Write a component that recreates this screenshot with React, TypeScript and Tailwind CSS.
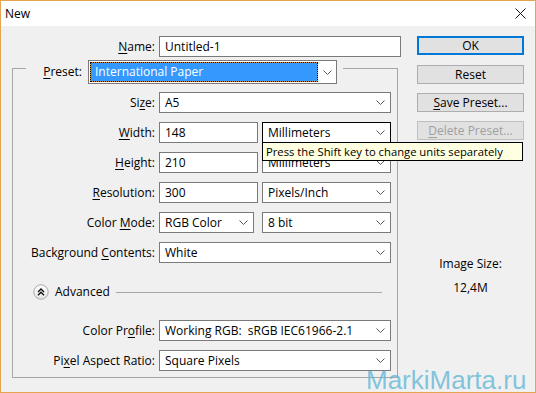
import React from "react";

function Chevron() {
  return (
    <svg width="9" height="5" viewBox="0 0 9 5" className="shrink-0">
      <polyline points="0.5,0.5 4.5,4.5 8.5,0.5" fill="none" stroke="#5a5a5a" strokeWidth="1" />
    </svg>
  );
}

function Select({ w, value, focused }: { w: string; value: string; focused?: boolean }) {
  return (
    <div
      className={`${w} h-[21px] bg-white border ${focused ? "border-black" : "border-[#7a7a7a]"} flex items-center justify-between pl-[5px] pr-[5px]`}
    >
      <span className="whitespace-pre">{value}</span>
      <Chevron />
    </div>
  );
}

function TextBox({ w, value }: { w: string; value: string }) {
  return (
    <div className={`${w} h-[21px] bg-white border border-[#7a7a7a] flex items-center pl-[5px]`}>
      {value}
    </div>
  );
}

function Row({ label, children, className = "" }: { label: React.ReactNode; children: React.ReactNode; className?: string }) {
  return (
    <div className={`flex items-center h-[21px] ${className}`}>
      <div className="w-[142px] text-right whitespace-nowrap">{label}</div>
      <div className="ml-[4px] flex items-center gap-[4px]">{children}</div>
    </div>
  );
}

function U({ children }: { children: React.ReactNode }) {
  return <span className="underline underline-offset-[2px]">{children}</span>;
}

export default function App() {
  return (
    <div className="relative w-[536px] h-[393px] border border-[#e4a450] bg-[#f0f0f0] flex flex-col text-[12px] leading-[16px] text-black font-['Open_Sans',sans-serif] overflow-hidden">
      {/* title bar */}
      <div className="h-[25px] bg-white flex items-center justify-between pl-[4px] pr-[9px]">
        <span>New</span>
        <svg width="11" height="11" viewBox="0 0 11 11">
          <path d="M0.5 0.5 L10.5 10.5 M10.5 0.5 L0.5 10.5" stroke="#111" strokeWidth="1" />
        </svg>
      </div>

      <div className="flex flex-1 pl-[11px]">
        {/* left side */}
        <div className="w-[389px] flex flex-col pt-[10px]">
          <div className="flex items-center h-[21px]">
            <div className="w-[143px] text-right">
              <U>N</U>ame:
            </div>
            <div className="ml-[4px]">
              <TextBox w="w-[242px]" value="Untitled-1" />
            </div>
          </div>

          <div className="mt-[11px] w-[386px] h-[310px] border border-[#a6a6a6] flex flex-col">
            {/* preset legend */}
            <div className="relative mt-[-9px] ml-[13px] w-[317px] h-[24px] bg-[#f0f0f0] flex items-center">
              <div className="w-[56px] text-right">
                <U>P</U>reset:
              </div>
              <div className="ml-[6px] w-[249px] h-[24px] bg-white border border-[#7a7a7a] flex items-center pl-[1px] pr-[4px]">
                <div className="w-[228px] h-[20px] border border-dotted border-black bg-[#d08a30]">
                  <div className="h-full bg-[#3399ff] text-white flex items-center pl-[4px]">International Paper</div>
                </div>
                <div className="flex-1 flex justify-end">
                  <Chevron />
                </div>
              </div>
            </div>

            <Row label={<>Si<U>z</U>e:</>} className="mt-[8px]">
              <Select w="w-[232px]" value="A5" />
            </Row>
            <Row label={<><U>W</U>idth:</>} className="mt-[9px] relative z-20">
              <TextBox w="w-[99px]" value="148" />
              <div className="relative">
                <Select w="w-[129px]" value="Millimeters" focused />
                <div className="absolute left-0 top-[20px] w-[261px] h-[19px] bg-[#ffffe1] border border-black flex items-center pl-[3px] text-[11.25px] whitespace-nowrap">
                  Press the Shift key to change units separately
                </div>
              </div>
            </Row>
            <Row label={<><U>H</U>eight:</>} className="mt-[9px]">
              <TextBox w="w-[99px]" value="210" />
              <Select w="w-[129px]" value="Millimeters" />
            </Row>
            <Row label={<><U>R</U>esolution:</>} className="mt-[9px]">
              <TextBox w="w-[99px]" value="300" />
              <Select w="w-[129px]" value="Pixels/Inch" />
            </Row>
            <Row label={<>Color <U>M</U>ode:</>} className="mt-[9px]">
              <Select w="w-[95px]" value="RGB Color" />
              <div className="ml-[4px]">
                <Select w="w-[129px]" value="8 bit" />
              </div>
            </Row>
            <Row label={<>Background <U>C</U>ontents:</>} className="mt-[9px]">
              <Select w="w-[232px]" value="White" />
            </Row>

            {/* advanced */}
            <div className="mt-[21px] h-[16px] flex items-center pl-[20px] pr-[15px]">
              <svg width="16" height="16" viewBox="0 0 16 16" className="shrink-0">
                <defs>
                  <linearGradient id="adv" x1="0" y1="0" x2="0" y2="1">
                    <stop offset="0" stopColor="#ffffff" />
                    <stop offset="1" stopColor="#e4e4e4" />
                  </linearGradient>
                </defs>
                <circle cx="8" cy="8" r="7.2" fill="url(#adv)" stroke="#a8a8a8" strokeWidth="1" />
                <polyline points="5,8 8,5 11,8" fill="none" stroke="#111" strokeWidth="1.4" />
                <polyline points="5,11.2 8,8.2 11,11.2" fill="none" stroke="#111" strokeWidth="1.4" />
              </svg>
              <span className="ml-[6px]">Advanced</span>
              <div className="ml-[6px] flex-1 h-px bg-[#a6a6a6]" />
            </div>

            <Row label={<>Color Pr<U>o</U>file:</>} className="mt-[20px]">
              <Select w="w-[232px]" value="Working RGB:  sRGB IEC61966-2.1" />
            </Row>
            <Row label={<>Pi<U>x</U>el Aspect Ratio:</>} className="mt-[9px]">
              <Select w="w-[232px]" value="Square Pixels" />
            </Row>
          </div>
        </div>

        {/* right side */}
        <div className="ml-[16px] w-[107px] flex flex-col pt-[10px]">
          <button className="h-[19px] bg-[#e1e1e1] border-2 border-[#0078d7] flex items-center justify-center">OK</button>
          <button className="mt-[10px] h-[19px] bg-[#e1e1e1] border border-[#adadad] flex items-center justify-center">Reset</button>
          <button className="mt-[9px] h-[19px] bg-[#e1e1e1] border border-[#adadad] flex items-center justify-center">
            <span>
              <U>S</U>ave Preset...
            </span>
          </button>
          <button className="mt-[9px] h-[19px] bg-[#e1e1e1] border border-[#bfbfbf] text-[#a0a0a0] flex items-center justify-center">
            <span>
              <U>D</U>elete Preset...
            </span>
          </button>
          <div className="mt-[116px] text-center">Image Size:</div>
          <div className="mt-[8px] text-center">12,4M</div>
        </div>
      </div>

      <div className="absolute left-[365px] top-[367px] leading-[24px] text-[26px] font-['Liberation_Sans',sans-serif] text-[#5bb4d6]/75">
        MarkiMarta.ru
      </div>
    </div>
  );
}
